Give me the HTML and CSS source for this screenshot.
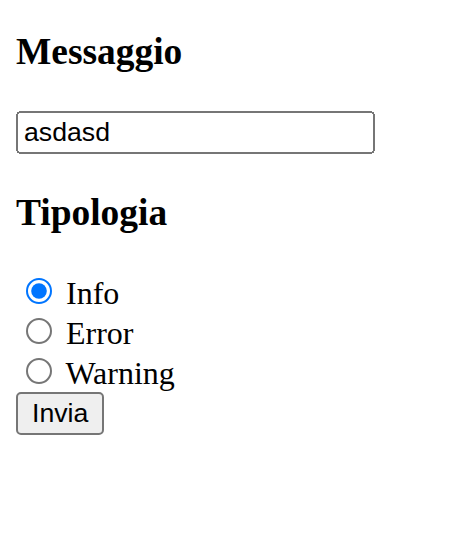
FILE: index.html
```html
<!DOCTYPE html>
<html>
<head>
<meta charset="utf-8">
<link rel="stylesheet" href="styles.css">
</head>
<body class="page">
<form class="form">
<h3 class="title first">Messaggio</h3>
<input class="text" type="text" value="asdasd">
<h3 class="title">Tipologia</h3>
<div class="group">
<input class="radio" type="radio" name="t" id="i" checked> <label for="i">Info</label><br>
<input class="radio" type="radio" name="t" id="e"> <label for="e">Error</label><br>
<input class="radio" type="radio" name="t" id="w"> <label for="w">Warning</label>
</div>
<button class="btn" type="button">Invia</button>
</form>
</body>
</html>
```
FILE: styles.css
```css
html { zoom: 2; }
.page { font-family: "Liberation Serif", serif; }
.first { margin-top: 7.22px; }
.text { font-family: "Liberation Sans", sans-serif; }
.btn { font-family: "Liberation Sans", sans-serif; }
```
